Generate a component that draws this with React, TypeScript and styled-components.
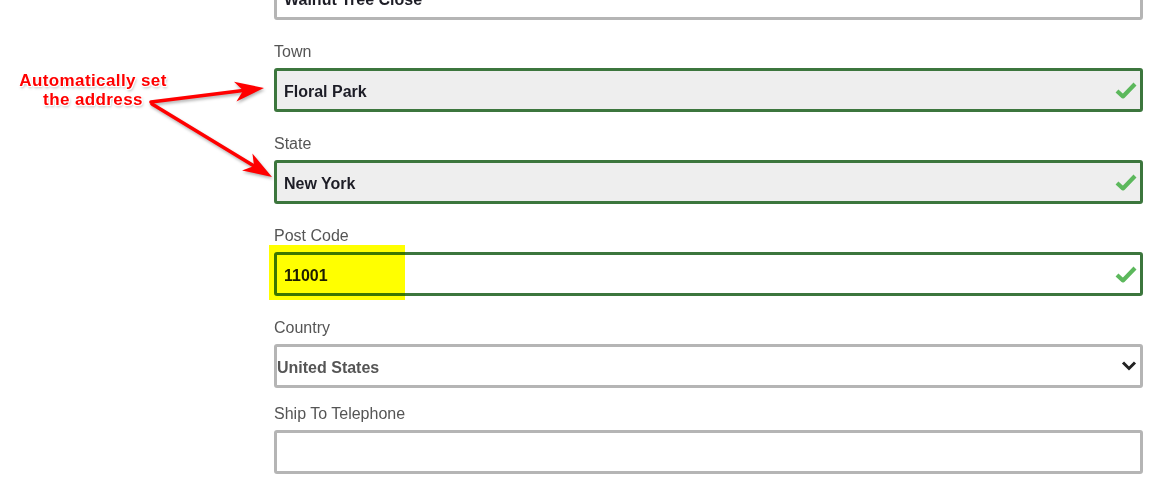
import React from "react";
import styled, { createGlobalStyle, css } from "styled-components";

const GlobalStyle = createGlobalStyle`
  html, body {
    margin: 0;
    padding: 0;
    background: #fff;
    overflow: hidden;
  }
  body {
    font-family: "Liberation Sans", Arial, sans-serif;
  }
`;

const Page = styled.div`
  position: relative;
  width: 1161px;
  height: 493px;
  overflow: hidden;
`;

const Form = styled.div`
  margin-top: -24px;
  margin-left: 274px;
  width: 869px;
  display: flex;
  flex-direction: column;
`;

const Group = styled.div<{ $tight?: boolean }>`
  display: flex;
  flex-direction: column;
  margin-bottom: ${(p) => (p.$tight ? "13px" : "19px")};
`;

const Label = styled.label`
  font-size: 16px;
  line-height: 24px;
  padding-top: 1px;
  color: #555;
  margin-bottom: 4px;
`;

const InputWrap = styled.div`
  position: relative;
  height: 44px;
`;

const Input = styled.input<{ $success?: boolean; $filled?: boolean }>`
  box-sizing: border-box;
  width: 100%;
  height: 44px;
  border: 3px solid #b5b5b5;
  border-radius: 3px;
  padding: 3px 7px 0;
  font-family: "Liberation Sans", Arial, sans-serif;
  font-size: 16px;
  font-weight: bold;
  color: #1d1d26;
  background: #fff;
  outline: none;
  ${(p) =>
    p.$success &&
    css`
      border-color: #3c763d;
    `}
  ${(p) =>
    p.$filled &&
    css`
      background: #eee;
    `}
`;

const Select = styled.select`
  box-sizing: border-box;
  width: 100%;
  height: 44px;
  border: 3px solid #b5b5b5;
  border-radius: 3px;
  padding: 2px 0 0 0;
  font-family: "Liberation Sans", Arial, sans-serif;
  font-size: 16px;
  font-weight: bold;
  color: #555;
  background: #fff;
  appearance: none;
  outline: none;
`;

const IconSlot = styled.span`
  position: absolute;
  right: 6px;
  top: 50%;
  transform: translateY(-50%);
  display: flex;
  pointer-events: none;
`;

const Highlight = styled.span`
  position: absolute;
  left: -5px;
  top: -7px;
  width: 136px;
  height: 55px;
  background: #ffff00;
  mix-blend-mode: multiply;
  pointer-events: none;
`;

const Note = styled.div`
  position: absolute;
  left: 10px;
  top: 71px;
  width: 166px;
  text-align: center;
  font-family: "Liberation Sans", Arial, sans-serif;
  font-size: 17px;
  font-weight: bold;
  letter-spacing: 0.4px;
  line-height: 19px;
  color: #f00;
  text-shadow: -1px -1px 0 #fff, 1px -1px 0 #fff, -1px 1px 0 #fff,
    1px 1px 0 #fff, 0 0 3px #fff, 1px 2px 3px rgba(0, 0, 0, 0.35);
`;

const Arrows = styled.svg`
  position: absolute;
  left: 0;
  top: 0;
  pointer-events: none;
  filter: drop-shadow(1px 2px 1.5px rgba(0, 0, 0, 0.3));
`;

const Check = () => (
  <svg width="22" height="17" viewBox="0 0 22 17">
    <path d="M2 9.5 L8 15 L20 2.5" fill="none" stroke="#5cb85c" strokeWidth="4.2" strokeLinejoin="miter" />
  </svg>
);

const Chevron = () => (
  <svg width="16" height="11" viewBox="0 0 16 11">
    <path d="M2 2 L8 8 L14 2" fill="none" stroke="#222" strokeWidth="3" />
  </svg>
);

function arrow(x1: number, y1: number, x2: number, y2: number) {
  const dx = x2 - x1;
  const dy = y2 - y1;
  const len = Math.hypot(dx, dy);
  const ux = dx / len;
  const uy = dy / len;
  const nx = -uy;
  const ny = ux;
  const hl = 29;
  const hw = 10;
  const notch = 21;
  const bx = x2 - ux * hl;
  const by = y2 - uy * hl;
  const pts = [
    [x2, y2],
    [bx + nx * hw, by + ny * hw],
    [x2 - ux * notch, y2 - uy * notch],
    [bx - nx * hw, by - ny * hw],
  ]
    .map((p) => p.join(","))
    .join(" ");
  return (
    <g>
      <line
        x1={x1}
        y1={y1}
        x2={x2 - ux * notch}
        y2={y2 - uy * notch}
        stroke="#f00"
        strokeWidth="3.6"
        strokeLinecap="round"
      />
      <polygon points={pts} fill="#f00" />
    </g>
  );
}

export default function App() {
  return (
    <Page>
      <GlobalStyle />
      <Form>
        <Group>
          <InputWrap>
            <Input readOnly defaultValue="Walnut Tree Close" />
          </InputWrap>
        </Group>
        <Group>
          <Label>Town</Label>
          <InputWrap>
            <Input readOnly $success $filled defaultValue="Floral Park" />
            <IconSlot>
              <Check />
            </IconSlot>
          </InputWrap>
        </Group>
        <Group>
          <Label>State</Label>
          <InputWrap>
            <Input readOnly $success $filled defaultValue="New York" />
            <IconSlot>
              <Check />
            </IconSlot>
          </InputWrap>
        </Group>
        <Group>
          <Label>Post Code</Label>
          <InputWrap>
            <Input readOnly $success defaultValue="11001" />
            <IconSlot>
              <Check />
            </IconSlot>
            <Highlight />
          </InputWrap>
        </Group>
        <Group $tight>
          <Label>Country</Label>
          <InputWrap>
            <Select defaultValue="us">
              <option value="us">United States</option>
            </Select>
            <IconSlot>
              <Chevron />
            </IconSlot>
          </InputWrap>
        </Group>
        <Group>
          <Label>Ship To Telephone</Label>
          <InputWrap>
            <Input readOnly />
          </InputWrap>
        </Group>
      </Form>
      <Arrows width="1161" height="493" viewBox="0 0 1161 493">
        {arrow(151, 102, 264, 88)}
        {arrow(152, 104, 272, 177)}
      </Arrows>
      <Note>
        Automatically set
        <br />
        the address
      </Note>
    </Page>
  );
}
